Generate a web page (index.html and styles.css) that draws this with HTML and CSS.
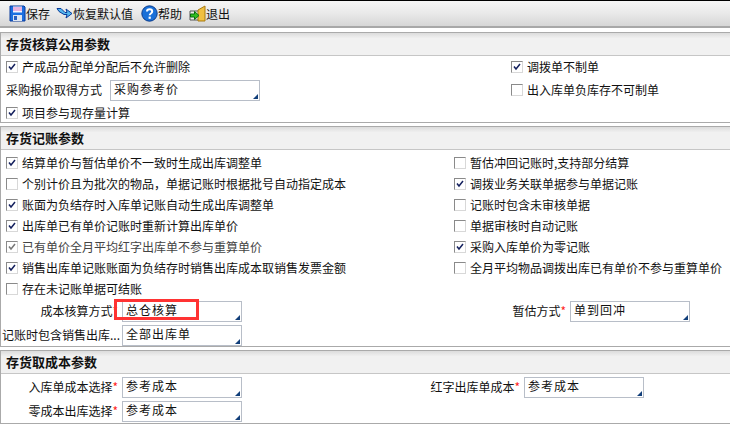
FILE: index.html
```html
<!DOCTYPE html>
<html lang="zh-CN">
<head>
<meta charset="utf-8">
<title>存货核算参数</title>
<link rel="stylesheet" href="styles.css">
</head>
<body>
<div class="toolbar">
  <div class="tool tool-save"><svg class="icon" viewBox="0 0 17 17"><path d="M1 1h14l1 1v14H1z" fill="#1c6fe0" stroke="#0a3a9a"/><rect x="4" y="1.500" width="9" height="6" fill="#f4f6ff"/><path d="M4 3h9M4 5h9" stroke="#e070c0"/><rect x="4" y="10" width="9" height="6" fill="#dfe6f2"/><rect x="5" y="11" width="3" height="4" fill="#2a5fc0"/></svg><span>保存</span></div>
  <div class="tool tool-restore"><svg class="icon" viewBox="0 0 17 17"><path d="M1 3.500h4l4 4h2l-1-3.500 6 4.500-6 4.500 1-3.500H8L3 6.500z" fill="#55b8ee" stroke="#0a3a9a" stroke-linejoin="round"/></svg><span>恢复默认值</span></div>
  <div class="tool tool-help"><svg class="icon" viewBox="0 0 17 17"><circle cx="8.500" cy="8.500" r="7.700" fill="#1a70d8" stroke="#0a3a8a"/><path d="M6 6.600c0-3 5.200-3 5.200 0 0 2-2.500 1.800-2.500 3.600" fill="none" stroke="#fff" stroke-width="2"/><rect x="7.600" y="11.600" width="2.200" height="2.200" fill="#fff"/></svg><span>帮助</span></div>
  <div class="tool tool-exit"><svg class="icon" viewBox="0 0 17 17"><path d="M1 6h10v9H1z" fill="#eef0ea" stroke="#555"/><path d="M9 5l7-4v15H9z" fill="#f0c040" stroke="#a87a10"/><path d="M1.500 9h4V6.500l4.500 4-4.500 4V12h-4z" fill="#30c020" stroke="#0a6a10"/></svg><span>退出</span></div>
</div>

<section class="panel panel-common">
  <h2 class="panel-title">存货核算公用参数</h2>
  <div class="panel-body">
    <div class="split-common">
      <div class="rows">
        <label class="check"><span class="box on"><svg viewBox="0 0 10 10"><path d="M2 4.500l2 2.500 4-5" fill="none" stroke="#14205e" stroke-width="1.500"/></svg></span>产成品分配单分配后不允许删除</label>
        <div class="inline-field">
          <span class="inline-label">采购报价取得方式</span>
          <div class="select wide">采购参考价</div>
        </div>
        <label class="check"><span class="box on"><svg viewBox="0 0 10 10"><path d="M2 4.500l2 2.500 4-5" fill="none" stroke="#14205e" stroke-width="1.500"/></svg></span>项目参与现存量计算</label>
      </div>
      <div class="rows rows-spaced">
        <label class="check"><span class="box on"><svg viewBox="0 0 10 10"><path d="M2 4.500l2 2.500 4-5" fill="none" stroke="#14205e" stroke-width="1.500"/></svg></span>调拨单不制单</label>
        <label class="check"><span class="box"></span>出入库单负库存不可制单</label>
      </div>
    </div>
  </div>
</section>

<section class="panel panel-record">
  <h2 class="panel-title">存货记账参数</h2>
  <div class="panel-body">
    <div class="grid-checks">
      <label class="check"><span class="box on"><svg viewBox="0 0 10 10"><path d="M2 4.500l2 2.500 4-5" fill="none" stroke="#14205e" stroke-width="1.500"/></svg></span>结算单价与暂估单价不一致时生成出库调整单</label>
      <label class="check"><span class="box"></span>暂估冲回记账时,支持部分结算</label>
      <label class="check"><span class="box"></span>个别计价且为批次的物品，单据记账时根据批号自动指定成本</label>
      <label class="check"><span class="box on"><svg viewBox="0 0 10 10"><path d="M2 4.500l2 2.500 4-5" fill="none" stroke="#14205e" stroke-width="1.500"/></svg></span>调拨业务关联单据参与单据记账</label>
      <label class="check"><span class="box on"><svg viewBox="0 0 10 10"><path d="M2 4.500l2 2.500 4-5" fill="none" stroke="#14205e" stroke-width="1.500"/></svg></span>账面为负结存时入库单记账自动生成出库调整单</label>
      <label class="check"><span class="box"></span>记账时包含未审核单据</label>
      <label class="check"><span class="box on"><svg viewBox="0 0 10 10"><path d="M2 4.500l2 2.500 4-5" fill="none" stroke="#14205e" stroke-width="1.500"/></svg></span>出库单已有单价记账时重新计算出库单价</label>
      <label class="check"><span class="box"></span>单据审核时自动记账</label>
      <label class="check muted"><span class="box on"><svg viewBox="0 0 10 10"><path d="M2 4.500l2 2.500 4-5" fill="none" stroke="#777" stroke-width="1.500"/></svg></span>已有单价全月平均红字出库单不参与重算单价</label>
      <label class="check"><span class="box on"><svg viewBox="0 0 10 10"><path d="M2 4.500l2 2.500 4-5" fill="none" stroke="#14205e" stroke-width="1.500"/></svg></span>采购入库单价为零记账</label>
      <label class="check"><span class="box on"><svg viewBox="0 0 10 10"><path d="M2 4.500l2 2.500 4-5" fill="none" stroke="#14205e" stroke-width="1.500"/></svg></span>销售出库单记账账面为负结存时销售出库成本取销售发票金额</label>
      <label class="check"><span class="box"></span>全月平均物品调拨出库已有单价不参与重算单价</label>
      <label class="check"><span class="box"></span>存在未记账单据可结账</label>
    </div>
    <div class="form-row">
      <div class="field field-left">
        <span class="field-label">成本核算方式<i class="req">*</i></span>
        <div class="select">总仓核算</div>
        <div class="highlight"></div>
      </div>
      <div class="field field-estimate">
        <span class="field-label">暂估方式<i class="req">*</i></span>
        <div class="select">单到回冲</div>
      </div>
    </div>
    <div class="form-row">
      <div class="field field-left">
        <span class="field-label flush">记账时包含销售出库...</span>
        <div class="select">全部出库单</div>
      </div>
    </div>
  </div>
</section>

<section class="panel panel-cost">
  <h2 class="panel-title">存货取成本参数</h2>
  <div class="panel-body">
    <div class="form-row">
      <div class="field field-left">
        <span class="field-label">入库单成本选择<i class="req">*</i></span>
        <div class="select">参考成本</div>
      </div>
      <div class="field field-red">
        <span class="field-label">红字出库单成本<i class="req">*</i></span>
        <div class="select">参考成本</div>
      </div>
    </div>
    <div class="form-row">
      <div class="field field-left">
        <span class="field-label">零成本出库选择<i class="req">*</i></span>
        <div class="select">参考成本</div>
      </div>
    </div>
  </div>
</section>
</body>
</html>
```
FILE: styles.css
```css
* { box-sizing: border-box; }
html, body { margin: 0; padding: 0; }
body {
  width: 730px;
  height: 426px;
  overflow: hidden;
  background: #fff;
  color: #111;
  font: 12px/16px "Noto Sans CJK SC", "Liberation Sans", sans-serif;
}
.toolbar {
  height: 28px;
  display: flex;
  align-items: center;
  padding-left: 9px;
  border-top: 1px solid #000;
  border-bottom: 2px solid #a8a8a8;
  background: linear-gradient(#f6f6f6, #e9e9e9 50%, #d6d6d6);
}
.tool { display: flex; align-items: center; font-size: 12px; color: #111; }
.tool-save { width: 47px; }
.tool-restore { width: 85px; }
.tool-help { width: 48px; }
.icon { width: 17px; height: 17px; flex: none; }
.panel {
  border: 1px solid #aaa;
  border-right: 0;
}
.panel-common { margin-top: 4px; height: 91px; }
.panel-record { margin-top: 3px; height: 221px; }
.panel-cost { margin-top: 3px; height: 74px; }
.panel-title {
  margin: 0;
  height: 23px;
  padding-left: 5px;
  font-size: 13px;
  font-weight: 700;
  line-height: 22px;
  background: linear-gradient(#dcdcdc, #f1f1f1 25%);
  border-bottom: 1px solid #c6c6c6;
}
.split-common { display: grid; grid-template-columns: 505px 1fr; }
.rows { display: flex; flex-direction: column; }
.rows .check { height: 22px; }
.rows-spaced { gap: 1px; }
.inline-field { display: flex; align-items: center; height: 24px; padding-left: 5px; }
.inline-label { width: 104px; flex: none; }
.check {
  display: flex;
  align-items: center;
  height: 21px;
  padding-left: 5px;
  white-space: nowrap;
}
.check.muted { color: #444; }
.box {
  width: 12px;
  height: 12px;
  flex: none;
  margin-right: 4px;
  background: #fff;
  border: 1px solid;
  border-color: #8a8a8a #d8d8d8 #d8d8d8 #8a8a8a;
}
.box svg { display: block; width: 10px; height: 10px; }
.grid-checks {
  display: grid;
  grid-template-columns: 448px 1fr;
  padding-top: 2px;
}
.form-row { display: flex; height: 24px; align-items: center; }
.panel-cost .panel-body { padding-top: 1px; }
.field { display: flex; align-items: center; position: relative; }
.field-label {
  width: 121px;
  flex: none;
  text-align: right;
  padding-right: 4px;
  white-space: nowrap;
}
.field-label.flush { padding-right: 0; text-align: left; padding-left: 1px; }
.req { color: #f22; font-style: normal; }
.field-estimate { margin-left: 224px; }
.field-estimate .field-label { width: 104px; }
.field-red { margin-left: 161px; }
.select {
  position: relative;
  width: 120px;
  height: 21px;
  flex: none;
  padding: 0 3px;
  font-size: 12px;
  line-height: 16px;
  letter-spacing: 1px;
  border: 1px solid #b8bec8;
  background: #fff;
  white-space: nowrap;
}
.select::after {
  content: "";
  position: absolute;
  right: 1px;
  bottom: 1px;
  border-style: solid;
  border-width: 0 0 5px 5px;
  border-color: transparent transparent #123f7a transparent;
}
.select.wide { width: 150px; }
.highlight {
  position: absolute;
  left: 113px;
  top: -2px;
  width: 85px;
  height: 21px;
  border: 3px solid #f33;
}
```
